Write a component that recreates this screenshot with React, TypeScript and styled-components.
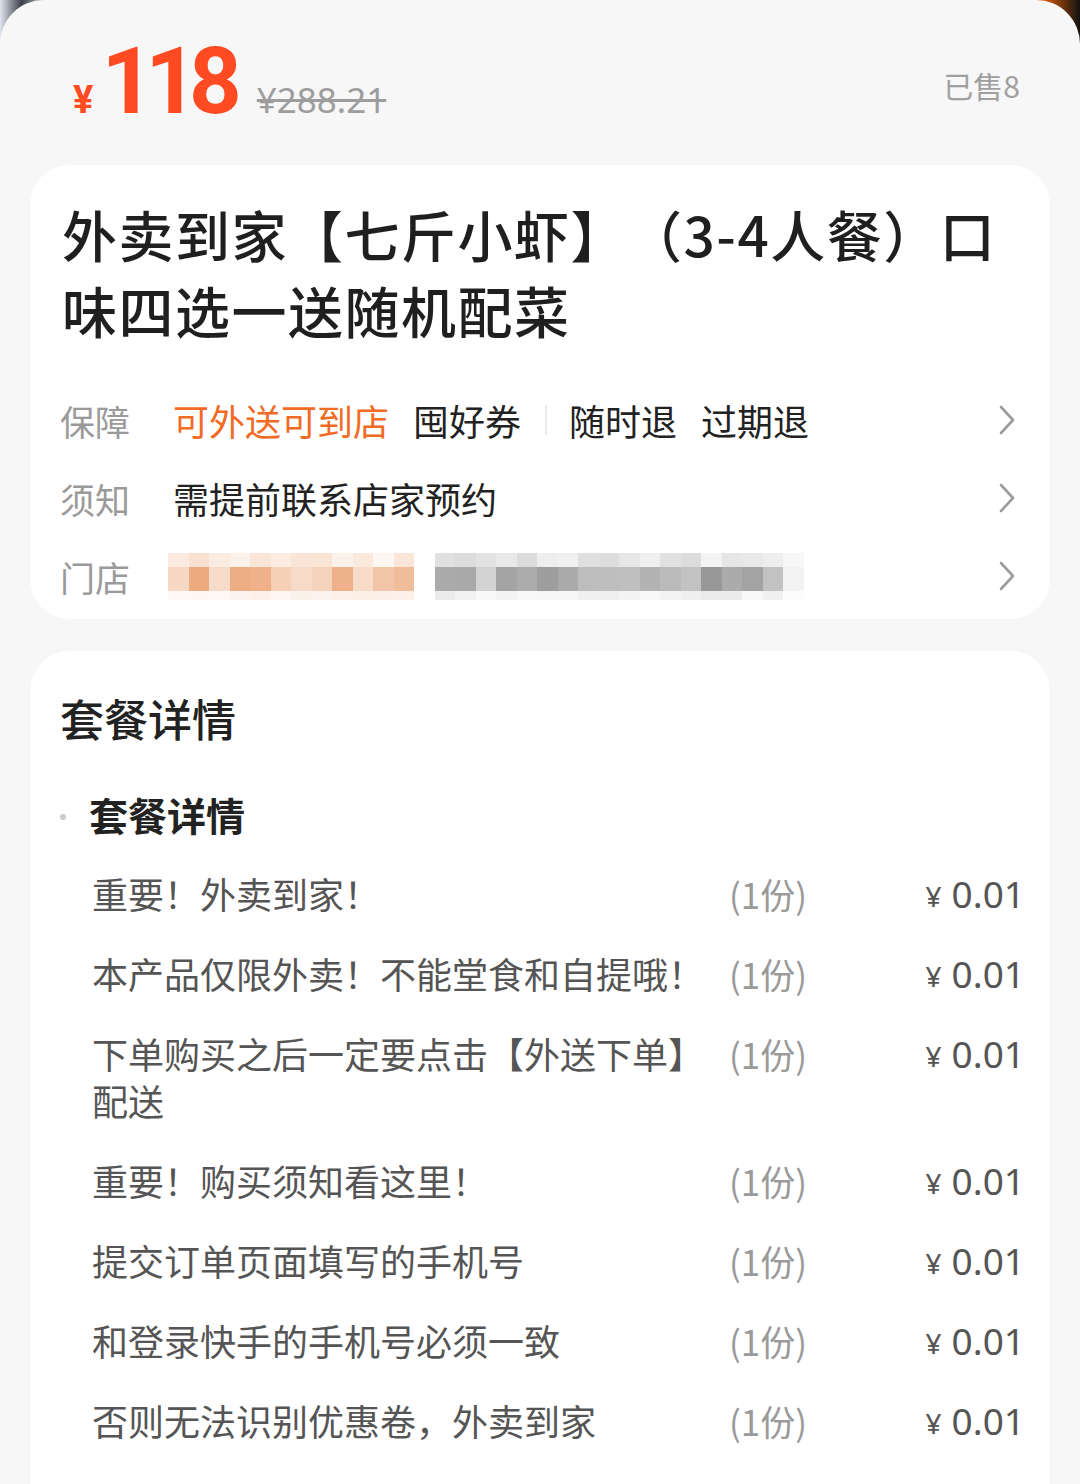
import React from 'react';
import styled, { createGlobalStyle } from 'styled-components';

const GlobalStyle = createGlobalStyle`
  body {
    margin: 0;
    font-family: 'Noto Sans CJK SC', 'Noto Sans', sans-serif;
    text-spacing-trim: space-all;
  }
`;

const Backdrop = styled.div`
  width: 1080px;
  height: 1484px;
  overflow: hidden;
  background: linear-gradient(
    90deg,
    #dfe4ee 0%,
    #3a3f4a 2%,
    #ffffff 5%,
    #ffffff 93%,
    #ff6a00 96%,
    #111111 100%
  );
`;

const Sheet = styled.div`
  height: 100%;
  background-color: #f7f7f7;
  border-radius: 44px 44px 0 0;
  display: flex;
  flex-direction: column;
`;

const PriceBar = styled.div`
  display: flex;
  align-items: baseline;
  padding: 36px 60px 0 73px;
  height: 165px;
  box-sizing: border-box;
`;

const Yen = styled.span`
  font-family: 'Roboto', sans-serif;
  font-weight: 700;
  font-size: 38px;
  color: #ff4a22;
  margin-right: 8px;
`;

const BigPrice = styled.span`
  font-family: 'Roboto', sans-serif;
  font-weight: 700;
  font-size: 92px;
  letter-spacing: -9px;
  color: #ff4a22;
  line-height: 1;
`;

const OldPrice = styled.span`
  font-family: 'Noto Sans', sans-serif;
  font-size: 35px;
  color: #9d9d9d;
  text-decoration: line-through;
  text-decoration-thickness: 3px;
  margin-left: 24px;
`;

const Sold = styled.span`
  margin-left: auto;
  font-size: 30px;
  line-height: 44px;
  color: #a0a0a0;
  align-self: flex-start;
  margin-top: 27px;
`;

const Card = styled.div<{ $grow?: boolean }>`
  margin: 0 30px;
  background-color: #ffffff;
  border-radius: 40px;
  padding: 0 30px;
  ${(p) => (p.$grow ? 'flex: 1; border-radius: 40px 40px 0 0; margin-top: 32px;' : '')}
`;

const Title = styled.div`
  font-size: 55px;
  font-weight: 500;
  line-height: 76px;
  color: #1f1f1f;
  padding: 30px 20px 0 2px;
  margin-bottom: 34px;
  letter-spacing: 1.5px;
`;

const InfoRow = styled.div`
  display: flex;
  align-items: center;
  height: 78px;
  &:last-child {
    margin-bottom: 4px;
  }
`;

const Label = styled.span`
  width: 113px;
  flex-shrink: 0;
  font-size: 35px;
  color: #9a9a9a;
`;

const Value = styled.span<{ $accent?: boolean }>`
  font-size: 36px;
  color: ${(p) => (p.$accent ? '#f26b24' : '#222222')};
  margin-right: 24px;
`;

const Divider = styled.span`
  width: 2px;
  height: 30px;
  background-color: #ebebeb;
  margin-right: 22px;
`;

const Chevron = styled.svg`
  margin-left: auto;
  margin-right: 4px;
  width: 18px;
  height: 32px;
  flex-shrink: 0;
`;

const Mosaic = styled.div`
  display: flex;
  flex-direction: column;
  margin-left: -5px;
`;

const MosaicLine = styled.div<{ $h: number }>`
  display: flex;
  height: ${(p) => p.$h}px;
`;

const Cell = styled.span`
  width: 20.5px;
  height: 100%;
`;

const SectionTitle = styled.div`
  font-size: 44px;
  font-weight: 500;
  line-height: 60px;
  color: #222222;
  padding: 37px 0 0 0;
`;

const SubHead = styled.div`
  display: flex;
  align-items: center;
  margin-top: 38px;
  font-size: 39px;
  font-weight: 700;
  line-height: 56px;
  color: #222222;
`;

const Dot = styled.span`
  width: 6px;
  height: 6px;
  border-radius: 50%;
  background-color: #cccccc;
  margin: 6px 23px 0 0;
`;

const ItemList = styled.div`
  display: flex;
  flex-direction: column;
  gap: 33px;
  margin-top: 28px;
  padding-left: 32px;
`;

const Item = styled.div`
  display: grid;
  grid-template-columns: 630px 1fr auto;
  align-items: start;
  line-height: 47px;
`;

const ItemName = styled.span`
  font-size: 36px;
  color: #555555;
`;

const Qty = styled.span`
  font-size: 35px;
  color: #9a9a9a;
  padding-left: 7px;
  height: 47px;
`;

const Price = styled.span`
  display: inline-flex;
  align-items: center;
  height: 47px;
  font-family: 'Noto Sans', sans-serif;
  font-size: 37px;
  line-height: 1;
  color: #555555;
  margin-right: -5px;
`;

const PriceYen = styled.span`
  font-size: 28px;
  margin: 4px 10px 0 0;
`;

const ChevronIcon = () => (
  <Chevron viewBox="0 0 18 32">
    <path d="M3 3 L15 16 L3 29" fill="none" stroke="#9c9c9c" strokeWidth="2.6" strokeLinecap="round" strokeLinejoin="round" />
  </Chevron>
);

// pixelated store name / address
const seeded = (i: number) => {
  const x = Math.sin(i * 12.9898) * 43758.5453;
  return x - Math.floor(x);
};

const mosaicLines = [
  { h: 14, strength: 0.35 },
  { h: 24, strength: 1 },
  { h: 9, strength: 0.2 },
];

const cellColor = (col: number, line: number, strength: number) => {
  if (col === 12) return 'transparent';
  const r = seeded(col * 7 + line * 31 + 3);
  const a = (0.25 + r * 0.6) * strength;
  if (col < 12) return `rgba(232, 150, 96, ${a.toFixed(2)})`;
  if (col > 29) return `rgba(170, 170, 170, ${(a * 0.3).toFixed(2)})`;
  return `rgba(120, 120, 120, ${(a * 0.9).toFixed(2)})`;
};

const BlurredStore = () => (
  <Mosaic>
    {mosaicLines.map((l, li) => (
      <MosaicLine key={li} $h={l.h}>
        {Array.from({ length: 31 }).map((_, ci) => (
          <Cell key={ci} style={{ background: cellColor(ci, li, l.strength) }} />
        ))}
      </MosaicLine>
    ))}
  </Mosaic>
);

const items = [
  '重要！外卖到家！',
  '本产品仅限外卖！不能堂食和自提哦！',
  '下单购买之后一定要点击【外送下单】配送',
  '重要！购买须知看这里！',
  '提交订单页面填写的手机号',
  '和登录快手的手机号必须一致',
  '否则无法识别优惠卷，外卖到家',
];

const App: React.FC = () => {
  return (
    <Backdrop>
      <GlobalStyle />
      <Sheet>
        <PriceBar>
          <Yen>¥</Yen>
          <BigPrice>118</BigPrice>
          <OldPrice>¥288.21</OldPrice>
          <Sold>已售8</Sold>
        </PriceBar>

        <Card>
          <Title>外卖到家【七斤小虾】（3-4人餐）口味四选一送随机配菜</Title>
          <InfoRow>
            <Label>保障</Label>
            <Value $accent>可外送可到店</Value>
            <Value>囤好券</Value>
            <Divider />
            <Value>随时退</Value>
            <Value>过期退</Value>
            <ChevronIcon />
          </InfoRow>
          <InfoRow>
            <Label>须知</Label>
            <Value>需提前联系店家预约</Value>
            <ChevronIcon />
          </InfoRow>
          <InfoRow>
            <Label>门店</Label>
            <BlurredStore />
            <ChevronIcon />
          </InfoRow>
        </Card>

        <Card $grow>
          <SectionTitle>套餐详情</SectionTitle>
          <SubHead>
            <Dot />
            套餐详情
          </SubHead>
          <ItemList>
            {items.map((name) => (
              <Item key={name}>
                <ItemName>{name}</ItemName>
                <Qty>(1份)</Qty>
                <Price>
                  <PriceYen>¥</PriceYen>0.01
                </Price>
              </Item>
            ))}
          </ItemList>
        </Card>
      </Sheet>
    </Backdrop>
  );
};

export default App;
